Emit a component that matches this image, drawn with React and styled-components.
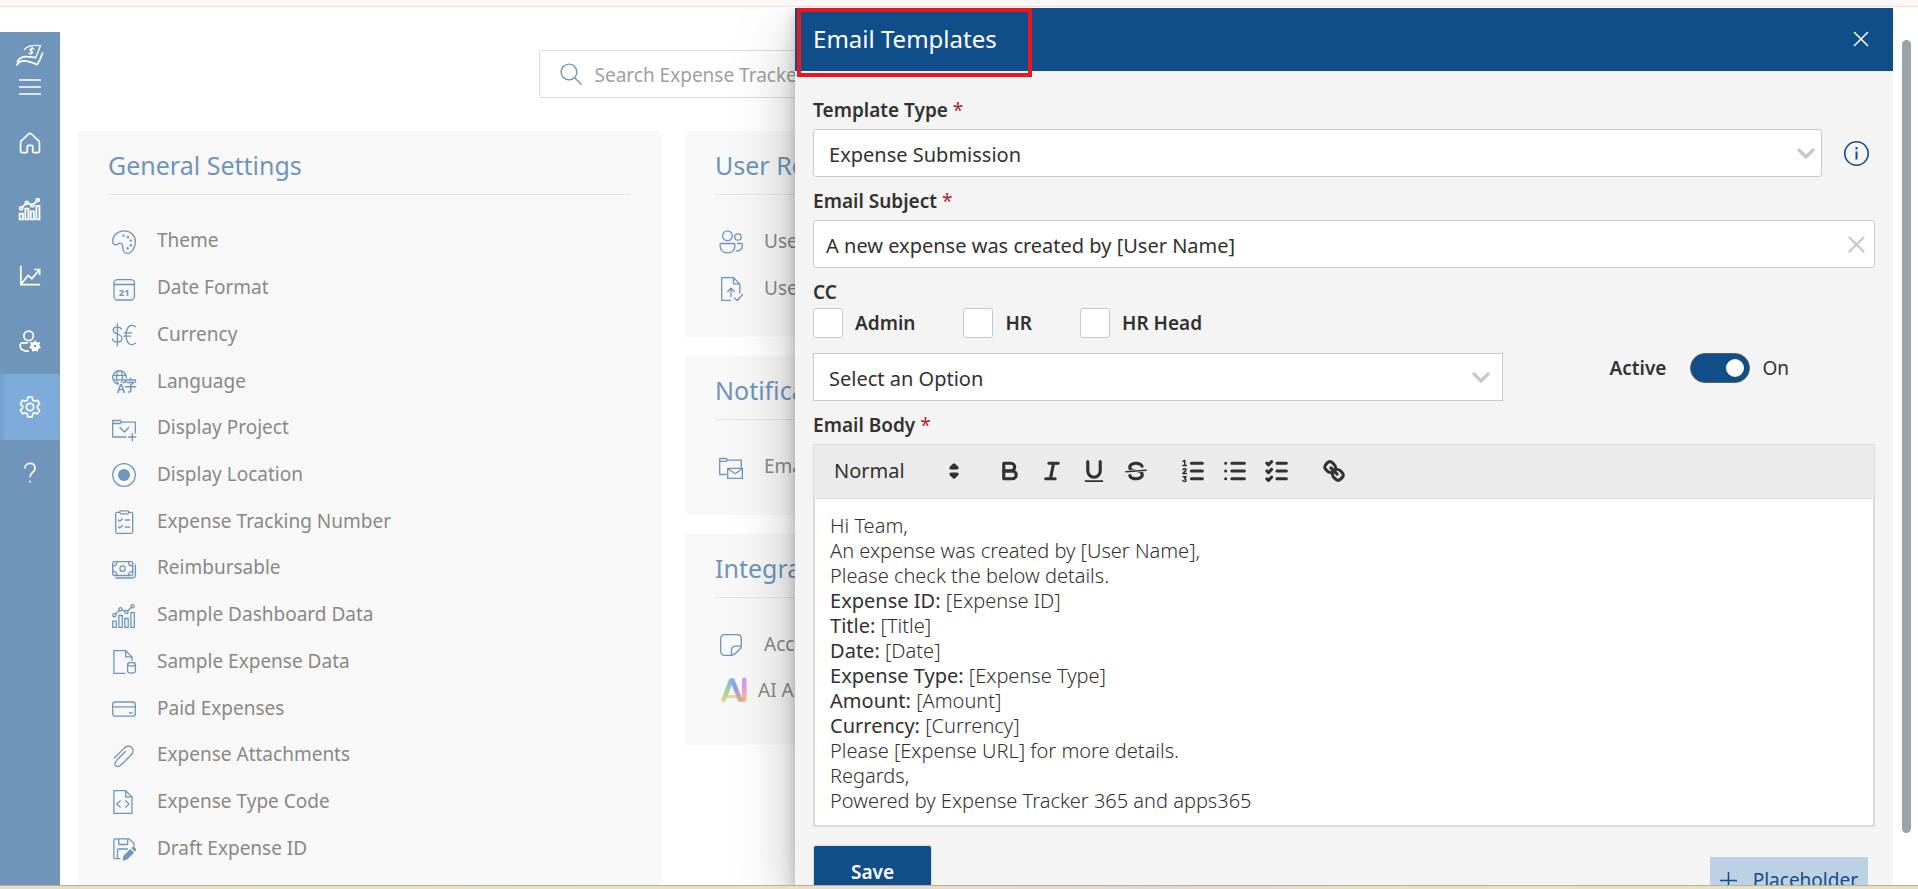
import React from "react";
import styled, { createGlobalStyle } from "styled-components";

const NAVY = "#0f4e89";
const STEEL = "#6f95ba";

const GlobalStyle = createGlobalStyle`
  *, *::before, *::after { box-sizing: border-box; }
  body { margin: 0; background: #fff; }
  body, button, input, select { font-family: "Noto Sans", "Open Sans", sans-serif; }
`;

const Page = styled.div`
  display: flex;
  flex-direction: column;
  height: 100vh;
  overflow: hidden;
`;
const TopStrip = styled.div`
  flex: none;
  height: 7px;
  background: #fff6f5;
  border-bottom: 1px solid #f3dcdc;
`;
const BottomStrip = styled.div`
  flex: none;
  height: 4px;
  border-top: 1px solid #b9afa2;
  background: linear-gradient(90deg, #e9dcc4, #ecdfc6 40%, #e2d8c8 60%, #efe0bf 80%, #e6dfbd);
`;
const Frame = styled.div`
  flex: 1;
  min-height: 0;
  display: flex;
  padding-top: 1px;
`;
const Stage = styled.div`
  position: relative;
  flex: 1;
  min-width: 0;
  display: flex;
  overflow: hidden;
`;
const ScrollGutter = styled.div`
  flex: none;
  width: 25px;
  padding: 32px 7px 52px 9px;
`;
const ScrollThumb = styled.div`
  height: 100%;
  border-radius: 5px;
  background: #98a3ac;
`;

/* ---------- side navigation ---------- */
const SideNav = styled.nav`
  flex: none;
  width: 60px;
  margin-top: 24px;
  background: ${STEEL};
  display: flex;
  flex-direction: column;
`;
const NavTop = styled.div`
  height: 78px;
  display: flex;
  flex-direction: column;
  align-items: center;
  padding-top: 12px;
  gap: 13px;
  color: #fff;
`;
const NavButton = styled.button`
  height: 66px;
  width: 60px;
  border: 0;
  padding: 0;
  display: grid;
  place-items: center;
  color: #fff;
  border-radius: ${(p) => (p.$active ? "3px" : "0")};
  background: ${(p) => (p.$active ? "#7eabd9" : "transparent")};
  box-shadow: ${(p) => (p.$active ? "inset 4px 0 0 #74a3d2" : "none")};
`;
const BareButton = styled.button`
  border: 0;
  padding: 0;
  background: transparent;
  color: inherit;
  display: grid;
  place-items: center;
`;

/* ---------- settings page ---------- */
const Content = styled.main`
  flex: 1;
  min-width: 0;
  display: flex;
  flex-direction: column;
  padding: 42px 18px 0;
`;
const SearchBox = styled.label`
  flex: none;
  align-self: center;
  width: 100%;
  max-width: 876px;
  height: 48px;
  margin-bottom: 33px;
  padding: 0 20px;
  display: flex;
  align-items: center;
  gap: 13px;
  border: 1px solid #dddddd;
  border-radius: 3px;
  color: ${STEEL};
`;
const SearchInput = styled.input`
  flex: 1;
  border: 0;
  outline: 0;
  padding: 2px 0 0;
  background: transparent;
  font-size: 19px;
  &::placeholder { color: #a19f9d; }
`;
const Columns = styled.div`
  flex: 1;
  min-height: 0;
  display: grid;
  grid-template-columns: repeat(3, minmax(0, 1fr));
  gap: 24px;
`;
const Column = styled.div`
  display: flex;
  flex-direction: column;
  gap: 19px;
`;
const Panel = styled.section`
  display: flex;
  flex-direction: column;
  flex: ${(p) => (p.$fill ? "1" : "none")};
  padding: 0 30px ${(p) => (p.$fill ? "14px" : "26px")};
  background: #f8f8f8;
`;
const PanelTitle = styled.h2`
  margin: 0;
  padding: 18px 0 13px;
  border-bottom: 1px solid #e4e4e4;
  font-size: 25px;
  line-height: 32px;
  font-weight: 400;
  color: ${STEEL};
  white-space: nowrap;
`;
const ItemList = styled.ul`
  flex: 1;
  list-style: none;
  margin: 0;
  padding: 22px 0 0;
  display: flex;
  flex-direction: column;
`;
const Item = styled.li`
  flex: 1 1 ${(p) => (p.$fluid ? "0" : p.$wide ? "52px" : "47px")};
  display: flex;
`;
const ItemLink = styled.a`
  display: flex;
  align-items: center;
  gap: ${(p) => (p.$wide ? "11px" : "21px")};
  padding: ${(p) => (p.$wide ? "0 0 6px 6px" : "0 0 0 4px")};
  color: #8a8886;
  font-size: 19px;
  line-height: 26px;
  white-space: nowrap;
  text-decoration: none;
  svg { color: ${STEEL}; margin-top: ${(p) => (p.$wide ? "0" : "3px")}; }
`;

/* ---------- drawer ---------- */
const Drawer = styled.aside`
  position: absolute;
  top: 0;
  right: 0;
  bottom: 0;
  width: 58%;
  display: flex;
  flex-direction: column;
  background: #f4f4f4;
  box-shadow: 0 26px 58px rgba(0, 0, 0, 0.26), 0 5px 14px rgba(0, 0, 0, 0.22);
`;
const DrawerHead = styled.header`
  position: relative;
  flex: none;
  height: 63px;
  padding: 0 24px 2px 18px;
  display: flex;
  align-items: center;
  justify-content: space-between;
  background: ${NAVY};
  color: #fff;
`;
const DrawerTitle = styled.h1`
  margin: 0;
  font-size: 24px;
  line-height: 32px;
  font-weight: 400;
`;
const Highlight = styled.span`
  position: absolute;
  left: 2px;
  top: 0;
  width: 235px;
  height: 69px;
  border: 4px solid #e8191e;
`;
const DrawerBody = styled.form`
  flex: 1;
  min-height: 0;
  overflow: hidden;
  padding: 25px 18px 0;
  color: #323130;
`;
const Field = styled.div`
  margin-bottom: 10px;
`;
const Label = styled.label`
  display: block;
  height: 28px;
  margin-bottom: ${(p) => (p.$tight ? "2px" : "5px")};
  font-size: 19px;
  line-height: 28px;
  font-weight: 600;
`;
const Star = styled.span`
  color: #a4262c;
  font-weight: 400;
`;
const Row = styled.div`
  display: flex;
  align-items: ${(p) => p.$align || "center"};
`;
const Box = styled.div`
  position: relative;
  flex: ${(p) => p.$flex || "1"};
  min-width: 0;
  height: 48px;
  display: flex;
  align-items: center;
  border: 1px solid #cacaca;
  border-radius: ${(p) => (p.$square ? "0" : "3px")};
  background: #fff;
  color: #c8c8c8;
  padding-right: ${(p) => (p.$clear ? "9px" : p.$square ? "12px" : "6px")};
`;
const control = `
  flex: 1;
  min-width: 0;
  height: 100%;
  border: 0;
  outline: 0;
  background: transparent;
  appearance: none;
  color: #323130;
  font-size: 20px;
`;
const Select = styled.select`
  ${control}
  padding: 2px 0 0 15px;
`;
const TextInput = styled.input`
  ${control}
  padding: 2px 0 0 12px;
`;
const InfoButton = styled(BareButton)`
  margin: 0 6px 0 22px;
  color: ${NAVY};
`;
const Checks = styled.div`
  display: flex;
  gap: 48px;
  margin-bottom: 15px;
`;
const Check = styled.label`
  display: flex;
  align-items: center;
  gap: 12px;
  height: 30px;
  font-size: 19px;
  line-height: 32px;
  font-weight: 600;
`;
const Tick = styled.input`
  appearance: none;
  width: 30px;
  height: 30px;
  margin: 0;
  border: 1px solid #c8c8c8;
  border-radius: 3px;
  background: #fff;
`;
const Switch = styled.label`
  display: flex;
  align-items: center;
  height: 30px;
  margin-left: 10%;
  font-size: 19px;
`;
const SwitchName = styled.span`
  font-weight: 600;
  margin-right: 24px;
`;
const SwitchInput = styled.input`
  appearance: none;
  width: 60px;
  height: 30px;
  margin: 0 12px 0 0;
  padding: 0 5px;
  border: 1px solid #605e5c;
  border-radius: 15px;
  background: ${NAVY};
  display: flex;
  align-items: center;
  justify-content: flex-end;
  &::before {
    content: "";
    width: 18px;
    height: 18px;
    border-radius: 50%;
    background: #fff;
  }
`;
const Toolbar = styled.div`
  height: 54px;
  padding: 0 20px 2px;
  display: flex;
  align-items: center;
  border: 1px solid #dadada;
  border-bottom: 0;
  background: #ebebeb;
  color: #323130;
`;
const FormatPicker = styled.label`
  display: flex;
  align-items: center;
  width: 134px;
  margin-right: 21px;
`;
const FormatSelect = styled.select`
  ${control}
  padding: 0;
`;
const Tools = styled.div`
  display: flex;
  margin-right: 15px;
`;
const Tool = styled(BareButton)`
  width: 42px;
  height: 42px;
`;
const EditorBody = styled.div`
  min-height: 329px;
  padding: 14px 15px 12px;
  border: 2px solid #dadada;
  border-top-width: 1px;
  background: #fff;
  font-size: 20px;
  line-height: 25px;
  font-weight: 300;
  outline: 0;
  p { margin: 0; }
  strong { font-weight: 400; }
`;
const Actions = styled.div`
  display: flex;
  justify-content: space-between;
  align-items: flex-start;
  margin-top: 18px;
`;
const SaveButton = styled.button`
  width: 119px;
  height: 54px;
  border: 1px solid #d6dde4;
  border-radius: 3px;
  background: ${NAVY};
  color: #fff;
  font-size: 19px;
  font-weight: 600;
`;
const PlaceholderButton = styled.button`
  height: 46px;
  margin: 12px 7px 0 0;
  padding: 0 10px;
  border: 0;
  display: flex;
  align-items: center;
  gap: 16px;
  background: #bdd1e5;
  color: ${NAVY};
  font-size: 19px;
`;

/* ---------- icons ---------- */
const Svg = ({ size = 24, box = 24, sw = 1.3, children }) => (
  <svg width={size} height={size} viewBox={`0 0 ${box} ${box}`} fill="none" stroke="currentColor"
    strokeWidth={sw} strokeLinecap="round" strokeLinejoin="round" aria-hidden="true" overflow="visible">
    {children}
  </svg>
);
const BarsChart = () => (
  <g strokeLinecap="butt" strokeLinejoin="miter">
    <path d="M.7 17.2h3.6v6.1H.7zM6.9 11.5h3.4v11.8H6.9zM12.8 14.5h3.4v8.8h-3.4zM18.9 8.7h3.4v14.6h-3.4z" />
    <circle cx="2.3" cy="11.3" r="1.6" /><circle cx="8.5" cy="5.2" r="1.6" />
    <circle cx="14.5" cy="8.1" r="1.6" /><circle cx="20.5" cy="2.3" r="1.6" />
    <path d="M3.5 10.1l3.8-3.7M10 5.9l3 1.5M15.7 7l3.7-3.6" />
  </g>
);
const icons = {
  theme: <><path d="M12.7.8C6 .5 1.300 5 .7 10.500 .3 14 3.300 15.700 5.500 14.200 8 12.500 9.900 12.500 10.600 15.500c.5 2.500-.4 4.300 1.600 6.600 2.200 2.100 5.800 1.600 8.200-1.500 2-2.700 3-5.600 3-8.600C23.400 5.500 18.500 1 12.700.8z" /><g fill="currentColor" stroke="none"><circle cx="11.500" cy="5.600" r="1.200" /><circle cx="16" cy="7.200" r="1.200" /><circle cx="18.800" cy="10.600" r="1.200" /><circle cx="18.700" cy="15.200" r="1.200" /><circle cx="15.700" cy="18.300" r="1.200" /></g></>,
  date: <><rect x="2" y="2.600" width="20.400" height="20.400" rx="3.500" /><path d="M2 7.500h20.400" /><text x="12.200" y="19" fontSize="9.500" fontWeight="700" textAnchor="middle" fill="currentColor" stroke="none" fontFamily="Noto Sans, sans-serif">21</text></>,
  currency: <><path d="M9.300 6.200C8.800 3.600 1.200 2.900 1.200 7c0 4.800 8.800 3.200 8.800 8.400 0 5-8.800 4.600-9.400.6M5.400.8v22.400M23.400 3.700c-4.200-3-9.300-.6-9.300 8.300s5 11.400 9.300 8.300M12 9.800h7.500M12 13.200h6.500" /></>,
  language: <><circle cx="7.500" cy="7.500" r="6.800" /><ellipse cx="7.500" cy="7.500" rx="3" ry="6.800" /><path d="M1.500 5.300h12M1.500 9.800h11" /><text x="9" y="22.500" fontSize="12.500" fontWeight="600" textAnchor="middle" fill="currentColor" stroke="#f8f8f8" strokeWidth="2.500" paintOrder="stroke" fontFamily="Noto Sans, sans-serif">A</text><path d="M13 8.500h11v14H14.500z" fill="#f8f8f8" stroke="none" /><path d="M13.700 12.300V10h9.700v2.300M18.500 10V8.200M15.500 12.500h6.200l-3 2.500v6c0 .8-.8 1-2.200 1M13.500 16.700h10.200" strokeWidth="1.500" /></>,
  project: <><path d="M14 20H.7V3.500h7.500l1.600 1.600h13.500V16M.7 6.500h7.500l1.600-1.400M8 10.500l4.300 4.500 4.300-4.500M16.500 20h7.500M20.300 16.300v7.500" strokeLinejoin="miter" /></>,
  location: <><circle cx="12" cy="12" r="11.300" /><circle cx="12" cy="12" r="6" fill="currentColor" stroke="none" /></>,
  tracking: <><rect x="3.700" y="2.300" width="17" height="21" rx="1.500" /><path d="M9 .8h6.500c1 0 1.300.6 1.300 1.500s-.4 1.500-1.300 1.500H9c-1 0-1.300-.6-1.300-1.500S8 .8 9 .8z" fill="#f8f8f8" /><path d="M6.500 10l1.300 1.300L10.500 8.700M13.500 10h4M6.500 16.800l1.300 1.300 2.700-2.600M13.500 17h4" /></>,
  money: <><rect x=".7" y="4.700" width="20" height="13.800" rx="1.500" /><circle cx="10.600" cy="11.600" r="2.700" /><path d="M.7 9c3 0 4.300-1.500 4.300-4.300M16.500 4.700c0 2.800 1.500 4.300 4.200 4.300M.7 14.300c3 0 4.300 1.500 4.300 4.200M16.500 18.500c0-2.700 1.500-4.200 4.200-4.200M4 21h16c2.200 0 3.400-1.200 3.400-3.400V8" /></>,
  bars: <BarsChart />,
  fileData: <><path d="M13 23.300H1.900V.7h11.800l6.300 6.200v3.300M13.700.7v6.200H20" strokeLinejoin="miter" /><ellipse cx="19.500" cy="14.300" rx="3.900" ry="1.800" /><path d="M15.600 14.300v7c0 2.400 7.800 2.400 7.800 0v-7" /></>,
  card: <><rect x=".7" y="5" width="22.600" height="14.200" rx="2.500" /><path d="M.7 9.800h22.600M17.300 15.800h3" /></>,
  clip: <path d="M13.500 7.500L5.700 15.300c-1.600 1.800-2.700 3-2.800 4.500-.2 2 1.700 3 3.400 2.700 1.700-.3 3-1.800 4.500-3.300l8.200-8.200c2.400-2.400 2.600-5.500.7-7.500-2-2-5-1.600-7.400.6L2.500 13.800" />,
  code: <><path d="M1.900.7h11.800l6.300 6.200v16.400H1.900zM13.700.7v6.200H20" strokeLinejoin="miter" /><path d="M8.200 10.700l-3.300 3.200 3.300 3.200M13.700 10.700l3.300 3.200-3.300 3.200" strokeLinejoin="miter" /></>,
  draft: <><path d="M8 21.700H3.500c-1 0-1.600-.6-1.600-1.600V3.500c0-1 .6-1.600 1.600-1.600h13.700l4.800 4.800v2.500M6.700 1.900v4.600c0 .7.300 1 1 1h7c.7 0 1-.3 1-1V1.900M5.500 21.500v-8.300c0-.8.400-1.200 1.200-1.200h8.800" /><path d="M10.500 23.800l1-5 6.800-6.800 3.700 3.800-6.800 6.800zM19.200 11l1-.8c2-1.200 4.800 1.600 3.500 3.600l-.8.900z" fill="currentColor" stroke="none" /></>,
  users: <><circle cx="8.500" cy="5.800" r="4.900" /><circle cx="19" cy="7" r="3.200" /><path d="M2.500 13.500h12c1 0 1.700.6 1.500 2-.3 5-3.600 7.300-7.500 7.300S1.300 20.500 1 15.500c-.1-1.400.5-2 1.500-2zM18.500 13.500h3.700c1 0 1.400.5 1.300 1.500-.2 4-2.500 6-6 6" /></>,
  userFile: <><path d="M11.500 23.300H2.700V.7h11.800l6.300 6.200v9M14.500.7v6.200h6.300" strokeLinejoin="miter" /><path d="M12 19.500v-8M8.700 14.500L12 11.200l3.300 3.300M15.500 21l2.700 2.500 5.300-6" /></>,
  mail: <><path d="M7 19.500H.7V3.500h6.600l1.600 1.600h13.400V12M.7 6.300h6.600l1.600-1.200M8.700 13.300h14.700v10H8.700zM8.900 13.700l7.200 5 7.200-5" strokeLinejoin="miter" /></>,
  note: <path d="M5.500 1.700h13c2.200 0 3.800 1.600 3.800 3.800v7.500c0 2.500-7 9.300-9.500 9.300H5.500c-2.200 0-3.800-1.600-3.800-3.800v-13c0-2.200 1.600-3.800 3.800-3.800zM12.500 22.300v-5.500c0-2.200 1.600-3.600 3.800-3.600h6" />,
};

const AiLogo = () => (
  <svg width="26" height="26" viewBox="0 0 26 26" fill="none" strokeLinecap="round" strokeWidth="4.600" aria-hidden="true">
    <defs>
      <linearGradient id="aiLeft" x1="8" y1="1" x2="4" y2="25" gradientUnits="userSpaceOnUse"><stop stopColor="#8cb9ec" /><stop offset=".6" stopColor="#9dd49a" /><stop offset="1" stopColor="#ecd888" /></linearGradient>
      <linearGradient id="aiMid" x1="12" y1="3" x2="19" y2="24" gradientUnits="userSpaceOnUse"><stop stopColor="#7fb4ee" /><stop offset=".4" stopColor="#8f9fea" /><stop offset="1" stopColor="#f5a78c" /></linearGradient>
      <linearGradient id="aiRight" x1="23" y1="2" x2="23" y2="24" gradientUnits="userSpaceOnUse"><stop stopColor="#c79cf0" /><stop offset=".55" stopColor="#efa0c8" /><stop offset="1" stopColor="#f9cb92" /></linearGradient>
    </defs>
    <path d="M7 19.500h9" stroke="#ecd68b" strokeWidth="3" />
    <path d="M10 3.500L2.600 23" stroke="url(#aiLeft)" />
    <path d="M23.300 3v19.500" stroke="url(#aiRight)" />
    <path d="M11.500 3.500l7.500 19h3" stroke="url(#aiMid)" />
  </svg>
);

const Logo = () => (
  <svg width="28" height="22" viewBox="0 0 28 22" fill="none" stroke="#fff" strokeLinecap="round" strokeLinejoin="round" aria-hidden="true">
    <path d="M8.500 5.500C11 2 15 .8 24.500 1.600c-1.500 3-2.500 7.500-5 12" strokeWidth="1.300" />
    <path d="M1.500 17.500c2.500-5 7-6 18-3.900M.8 20.800c3.500-5.500 9-5 20.400-.2 2.500-3.500 4-7.500 5.300-11.500" strokeWidth="1.700" />
    <path d="M17.800 4.900c-1.600-.9-3.800-.5-3.800.9 0 1.500 3 1.200 2.700 2.800-.4 1.400-2.700 1.200-3.800.4M16.200 3.300l-1.600 7.200" strokeWidth="1.200" />
  </svg>
);

const generalItems = [
  ["Theme", "theme"], ["Date Format", "date"], ["Currency", "currency"], ["Language", "language"],
  ["Display Project", "project"], ["Display Location", "location"], ["Expense Tracking Number", "tracking"],
  ["Reimbursable", "money"], ["Sample Dashboard Data", "bars"], ["Sample Expense Data", "fileData"],
  ["Paid Expenses", "card"], ["Expense Attachments", "clip"], ["Expense Type Code", "code"], ["Draft Expense ID", "draft"],
];

function SettingsPanel({ title, items, fill }) {
  return (
    <Panel $fill={fill}>
      <PanelTitle>{title}</PanelTitle>
      <ItemList>
        {items.map(([text, icon]) => (
          <Item key={text} $fluid={fill} $wide={icon === "ai"}>
            <ItemLink href="#" $wide={icon === "ai"}>
              {icon === "ai" ? <AiLogo /> : <Svg>{icons[icon]}</Svg>}
              {text}
            </ItemLink>
          </Item>
        ))}
      </ItemList>
    </Panel>
  );
}

const Chevron = () => (
  <svg width="18" height="11" viewBox="0 0 18 11" fill="none" stroke="currentColor" strokeWidth="3.200" strokeLinecap="round" aria-hidden="true" pointerEvents="none">
    <path d="M2 2l7 7 7-7" strokeLinejoin="miter" />
  </svg>
);

const tools = [
  [
    ["Bold", <g key="b" strokeWidth="2"><path d="M5,4H9.500A2.500,2.500,0,0,1,12,6.500v0A2.500,2.500,0,0,1,9.500,9H5Z" /><path d="M5,9h5.500A2.500,2.500,0,0,1,13,11.500v0A2.500,2.500,0,0,1,10.500,14H5Z" /></g>],
    ["Italic", <path key="i" strokeWidth="2" d="M7 4h6M5 14h6M8 14l2-10" />],
    ["Underline", <g key="u"><path strokeWidth="2" d="M5,3V9a4,4,0,0,0,8,0V3" /><rect x="3" y="15" width="12" height="1" rx=".5" fill="currentColor" stroke="none" /></g>],
    ["Strikethrough", <g key="s"><path strokeWidth="1" d="M15.500 8.500l-13 1" /><g fill="currentColor" stroke="none"><path d="M9.007,8C6.542,7.791,6,7.519,6,6.500,6,5.792,7.283,5,9,5c1.571,0,2.765.679,2.969,1.309a1,1,0,0,0,1.900-.617C13.356,4.106,11.354,3,9,3,6.200,3,4,4.538,4,6.500a3.200,3.200,0,0,0,.5,1.843Z" /><path d="M8.984,10C11.457,10.208,12,10.479,12,11.500c0,.708-1.283,1.500-3,1.500-1.571,0-2.765-.679-2.969-1.309a1,1,0,1,0-1.900.617C4.644,13.894,6.646,15,9,15c2.800,0,5-1.538,5-3.500a3.200,3.200,0,0,0-.5-1.843Z" /></g></g>],
  ],
  [
    ["Numbered list", <g key="o"><path strokeWidth="2" d="M8 4h7M8 9h7M8 14h7" /><path strokeWidth="1" d="M2.700 2.700l1-.4v3.200M2.500 5.500h2.200M2.600 8c.8-.9 2.200-.4 1.800.6l-1.900 2h2.200M2.600 12.700h1.900L3.600 14c1.300.1 1.200 1.700 0 1.700-.5 0-.9-.2-1.100-.5" /></g>],
    ["Bulleted list", <path key="l" strokeWidth="2" d="M7 4h8M7 9h8M7 14h8M3 4v0M3 9v0M3 14v0" />],
    ["Checklist", <path key="c" strokeWidth="2" d="M9 4h6M9 9h6M9 14h6M2.500 4l1 1 2-2M2.500 9l1 1 2-2M2.500 14l1 1 2-2" />],
  ],
  [
    ["Link", <g key="k" strokeWidth="2"><path d="M7 7l4 4" /><path d="M8.900,4.577a3.476,3.476,0,0,1,.36,4.679A3.476,3.476,0,0,1,4.577,8.900C3.185,7.500,2.035,6.400,4.217,4.217S7.500,3.185,8.900,4.577Z" /><path d="M13.423,9.100a3.476,3.476,0,0,0-4.679-.36,3.476,3.476,0,0,0,.36,4.679c1.392,1.392,2.500,2.542,4.679.36S14.815,10.500,13.423,9.100Z" /></g>],
  ],
];

const details = [
  ["Expense ID:", "[Expense ID]"], ["Title:", "[Title]"], ["Date:", "[Date]"],
  ["Expense Type:", "[Expense Type]"], ["Amount:", "[Amount]"], ["Currency:", "[Currency]"],
];

export default function App() {
  return (
    <Page>
      <GlobalStyle />
      <TopStrip />
      <Frame>
        <Stage>
          <SideNav>
            <NavTop>
              <Logo />
              <BareButton aria-label="Toggle menu">
                <svg width="22" height="16" viewBox="0 0 22 16" stroke="currentColor" strokeWidth="1.500" aria-hidden="true"><path d="M0 1h22M0 8h22M0 15h22" /></svg>
              </BareButton>
            </NavTop>
            <NavButton aria-label="Home">
              <Svg size={22} sw={1.900}><path d="M12 1.500c-.7 0-1.200.3-1.700.8L2.800 9.300C2 10 1.700 10.800 1.700 11.700V20.500c0 1.300.8 2 2 2h3.800c1 0 1.500-.6 1.500-1.500v-5c0-.8.500-1.300 1.300-1.300h3.400c.8 0 1.300.5 1.300 1.300v5c0 .9.500 1.500 1.500 1.500h3.800c1.200 0 2-.7 2-2v-8.800c0-.9-.3-1.700-1.100-2.400l-7.500-7c-.5-.5-1-.8-1.700-.8z" /></Svg>
            </NavButton>
            <NavButton aria-label="Dashboard"><Svg size={22} sw={2}><BarsChart /></Svg></NavButton>
            <NavButton aria-label="Reports">
              <Svg size={22} sw={1.900}><path d="M2 2v20.500h21M3 21l7-8.500 4 3.500 8-9.500M16.500 6H22.500v6" strokeLinecap="butt" strokeLinejoin="miter" /></Svg>
            </NavButton>
            <NavButton aria-label="User administration">
              <Svg size={22} sw={1.900}><circle cx="10.500" cy="6.300" r="5.200" /><path d="M9 14H4.500c-2.200 0-3.600 1.400-3.300 3.500C1.700 21 5 23 10 23" /><path d="M17.500 10.800l1.900 2.700 3.600-.3-1 3.500 2 2.400-3 1.500-.6 3.200-2.900-1.200-2.900 1.200-.6-3.200-3-1.500 2-2.400-1-3.500 3.600.3z" fill="currentColor" stroke="none" /><circle cx="17.500" cy="17.400" r="1.300" fill={STEEL} stroke="none" /></Svg>
            </NavButton>
            <NavButton aria-label="Settings" $active>
              <Svg size={22} sw={1.900}><path d="M9.700 1.300h4.600l.8 3.300 1.800 1 3.200-1 2.400 4-2.400 2.300v2.200l2.400 2.300-2.400 4-3.200-1-1.800 1-.8 3.300H9.700l-.8-3.300-1.800-1-3.200 1-2.400-4 2.400-2.300v-2.200L1.500 8.600l2.400-4 3.200 1 1.800-1z" /><circle cx="12" cy="12" r="4" /></Svg>
            </NavButton>
            <NavButton aria-label="Help">
              <Svg size={22} sw={1.800}><path d="M6.500 7c0-3.500 2.300-5.500 5.500-5.500s5.500 2 5.500 5.200c0 4.500-5.500 5-5.500 9.800M12 20.500v1.800" strokeLinecap="butt" /></Svg>
            </NavButton>
          </SideNav>

          <Content>
            <SearchBox>
              <Svg size={22} sw={1.500}><circle cx="9.800" cy="9.800" r="8.600" /><path d="M16 16l7.200 7.200" /></Svg>
              <SearchInput type="search" placeholder="Search Expense Tracker 365" />
            </SearchBox>
            <Columns>
              <Column><SettingsPanel title="General Settings" items={generalItems} fill /></Column>
              <Column>
                <SettingsPanel title="User Roles" items={[["User Roles", "users"], ["User Import", "userFile"]]} />
                <SettingsPanel title="Notifications" items={[["Email Templates", "mail"]]} />
                <SettingsPanel title="Integration" items={[["Accounting", "note"], ["AI Assistant", "ai"]]} />
              </Column>
            </Columns>
          </Content>

          <Drawer>
            <DrawerHead>
              <DrawerTitle>Email Templates</DrawerTitle>
              <Highlight />
              <BareButton aria-label="Close">
                <svg width="16" height="16" viewBox="0 0 16 16" stroke="currentColor" strokeWidth="1.500" aria-hidden="true"><path d="M1 1l14 14M15 1L1 15" /></svg>
              </BareButton>
            </DrawerHead>
            <DrawerBody onSubmit={(e) => e.preventDefault()}>
              <Field>
                <Label htmlFor="type">Template Type <Star>*</Star></Label>
                <Row>
                  <Box>
                    <Select id="type"><option>Expense Submission</option></Select>
                    <Chevron />
                  </Box>
                  <InfoButton type="button" aria-label="Information">
                    <svg width="25" height="25" viewBox="0 0 25 25" fill="none" stroke="currentColor" strokeWidth="1.600" aria-hidden="true"><circle cx="12.500" cy="12.500" r="11.700" /><path d="M12.500 10.500v8M12.500 6v2.500" strokeWidth="2" /></svg>
                  </InfoButton>
                </Row>
              </Field>
              <Field>
                <Label htmlFor="subject">Email Subject <Star>*</Star></Label>
                <Row>
                  <Box $clear>
                    <TextInput id="subject" type="text" defaultValue="A new expense was created by [User Name]" />
                    <BareButton type="button" aria-label="Clear subject">
                      <svg width="17" height="17" viewBox="0 0 17 17" stroke="currentColor" strokeWidth="2.200" strokeLinecap="round" aria-hidden="true"><path d="M1.500 1.500l14 14M15.500 1.500l-14 14" /></svg>
                    </BareButton>
                  </Box>
                </Row>
              </Field>
              <Label as="div" $tight>CC</Label>
              <Checks>
                {["Admin", "HR", "HR Head"].map((name) => (
                  <Check key={name}><Tick type="checkbox" />{name}</Check>
                ))}
              </Checks>
              <Field>
                <Row $align="flex-start">
                  <Box $square $flex="0 0 65%">
                    <Select aria-label="CC recipients"><option>Select an Option</option></Select>
                    <Chevron />
                  </Box>
                  <Switch>
                    <SwitchName>Active</SwitchName>
                    <SwitchInput type="checkbox" role="switch" defaultChecked />
                    On
                  </Switch>
                </Row>
              </Field>
              <Label as="div" id="bodyLabel">Email Body <Star>*</Star></Label>
              <Toolbar>
                <FormatPicker>
                  <FormatSelect aria-label="Text format"><option>Normal</option></FormatSelect>
                  <Svg size={28} box={18}><path d="M7 11l2 2 2-2zM7 7l2-2 2 2z" fill="currentColor" strokeWidth="2" /></Svg>
                </FormatPicker>
                {tools.map((group) => (
                  <Tools key={group[0][0]}>
                    {group.map(([name, drawing]) => (
                      <Tool key={name} type="button" aria-label={name}><Svg size={28} box={18}>{drawing}</Svg></Tool>
                    ))}
                  </Tools>
                ))}
              </Toolbar>
              <EditorBody contentEditable suppressContentEditableWarning role="textbox" aria-labelledby="bodyLabel" spellCheck={false}>
                <p>Hi Team,</p>
                <p>An expense was created by [User Name],</p>
                <p>Please check the below details.</p>
                {details.map(([name, value]) => (
                  <p key={name}><strong>{name}</strong> {value}</p>
                ))}
                <p>Please [Expense URL] for more details.</p>
                <p>Regards,</p>
                <p>Powered by Expense Tracker 365 and apps365</p>
              </EditorBody>
              <Actions>
                <SaveButton type="submit">Save</SaveButton>
                <PlaceholderButton type="button">
                  <svg width="17" height="17" viewBox="0 0 17 17" stroke="currentColor" strokeWidth="1.500" aria-hidden="true"><path d="M0 8.500h17M8.500 0v17" /></svg>
                  Placeholder
                </PlaceholderButton>
              </Actions>
            </DrawerBody>
          </Drawer>
        </Stage>
        <ScrollGutter><ScrollThumb /></ScrollGutter>
      </Frame>
      <BottomStrip />
    </Page>
  );
}
